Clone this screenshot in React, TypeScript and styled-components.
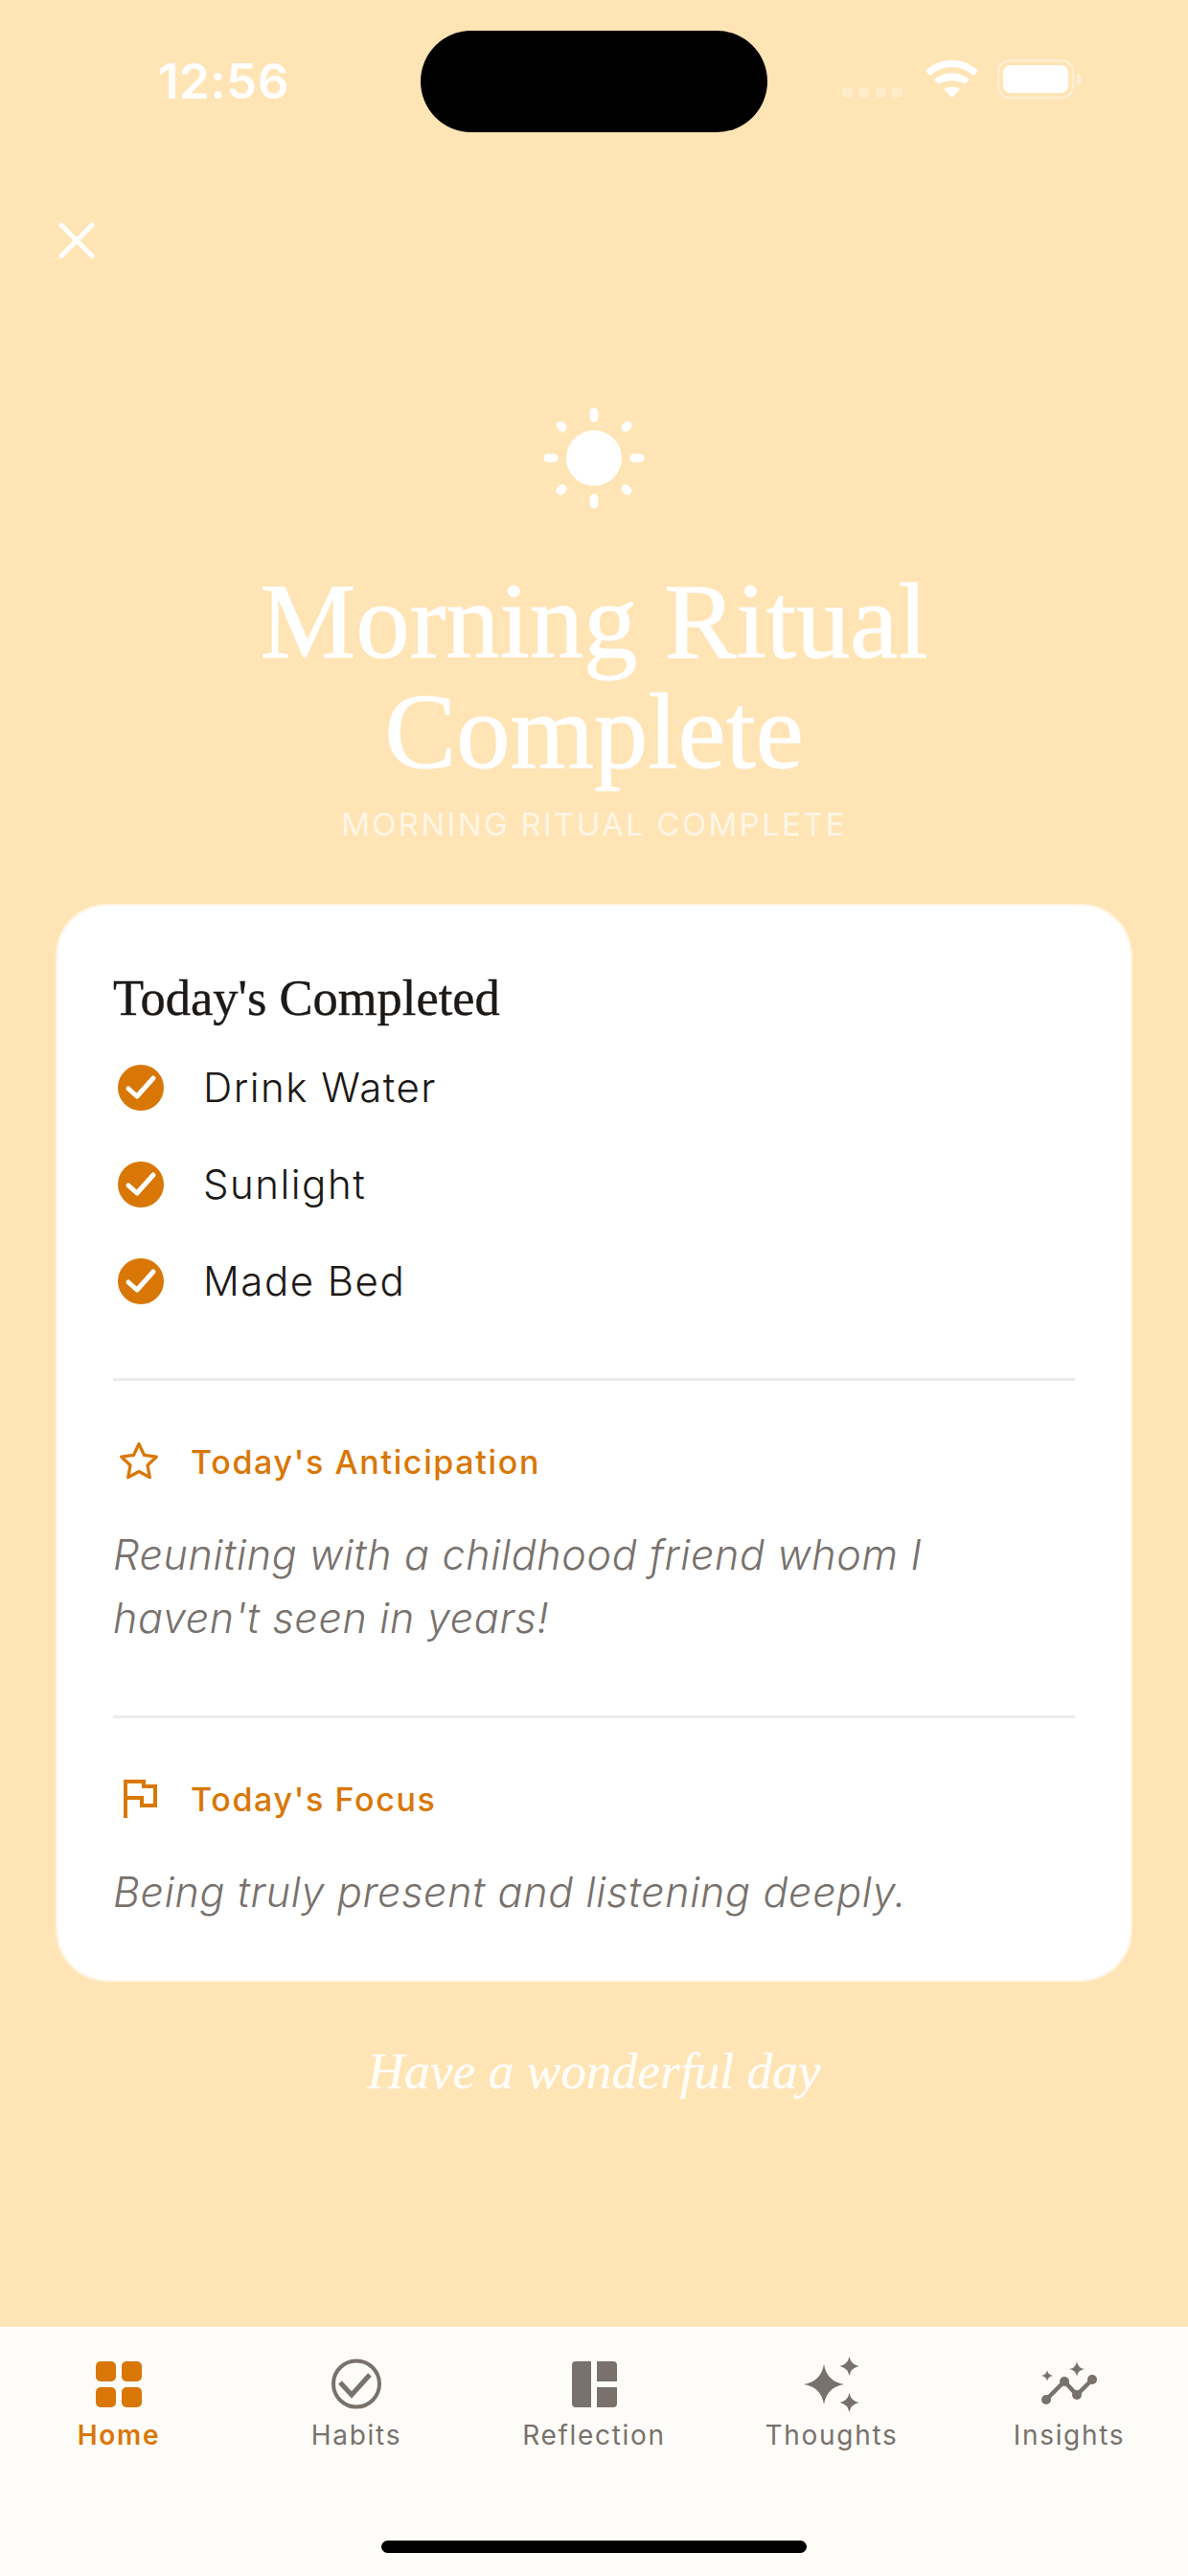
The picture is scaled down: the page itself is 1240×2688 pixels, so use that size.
import React from 'react';
import styled, { createGlobalStyle } from 'styled-components';

const GlobalStyle = createGlobalStyle`
  html, body {
    margin: 0;
    padding: 0;
    background: #ffe4b5;
  }
  * {
    box-sizing: border-box;
  }
`;

const SANS = `Inter, "Liberation Sans", sans-serif`;
const SERIF = `"Liberation Serif", serif`;
const ORANGE = '#d97706';
const GREY = '#78716c';

const Screen = styled.div`
  width: 1240px;
  height: 2688px;
  display: flex;
  flex-direction: column;
  background: #ffe4b5;
  overflow: hidden;
`;

const Main = styled.main`
  flex: 1;
  display: flex;
  flex-direction: column;
  min-height: 0;
`;

const StatusBar = styled.div`
  height: 170px;
  padding-top: 32px;
  display: grid;
  grid-template-columns: 439px 362px 1fr;
  align-items: start;
`;

const Time = styled.div`
  padding: 28px 0 0 165px;
  font-family: ${SANS};
  font-size: 51px;
  line-height: 50px;
  font-weight: 600;
  letter-spacing: 0.5px;
  color: #fff;
`;

const Island = styled.div`
  height: 106px;
  background: #000;
  border-radius: 53px;
`;

const StatusIcons = styled.div`
  padding: 30px 0 0 78px;
  line-height: 0;
`;

const CloseRow = styled.div`
  height: 116px;
  padding: 60px 0 0 59px;
  line-height: 0;
`;

const SunWrap = styled.div`
  display: flex;
  justify-content: center;
  margin-top: 139px;
  line-height: 0;
`;

const Title = styled.h1`
  margin: 60px 0 0;
  font-family: ${SERIF};
  font-size: 112.5px;
  line-height: 115px;
  font-weight: 400;
  color: #fff;
  text-align: center;
  -webkit-text-stroke: 1px #fff;
`;

const Subtitle = styled.div`
  margin-top: 19px;
  font-family: ${SANS};
  font-size: 33px;
  line-height: 40px;
  letter-spacing: 2.3px;
  color: rgba(255, 255, 255, 0.7);
  text-align: center;
`;

const Card = styled.section`
  margin: 63px 58px 0;
  padding: 66px 58px 0;
  height: 1125px;
  background: #fff;
  border: 2px solid rgba(255, 255, 255, 0.6);
  background-clip: padding-box;
  border-radius: 54px;
`;

const CardTitle = styled.h2`
  margin: 0 0 13px;
  font-family: ${SERIF};
  font-size: 52.5px;
  line-height: 60px;
  font-weight: 400;
  color: #1c1917;
  -webkit-text-stroke: 0.4px #1c1917;
`;

const HabitRow = styled.div`
  height: 101px;
  display: flex;
  align-items: center;
  gap: 41px;
  padding-left: 5px;
  font-family: ${SANS};
  font-size: 42px;
  font-weight: 300;
  letter-spacing: 1.5px;
  color: #1c1917;
`;

const Divider = styled.hr`
  margin: 0;
  border: 0;
  height: 3px;
  background: #ecebe8;
`;

const HabitList = styled.div`
  margin-bottom: 51px;
`;

const Section = styled.div<{ $bottom: number }>`
  padding-top: 62px;
  padding-bottom: ${(p) => p.$bottom}px;
`;

const SectionHead = styled.div`
  display: flex;
  align-items: center;
  gap: 31px;
  padding-left: 4px;
  height: 44px;
  font-family: ${SANS};
  font-size: 34px;
  font-weight: 500;
  letter-spacing: 1.65px;
  color: ${ORANGE};
`;

const SectionBody = styled.p`
  margin: 42px 0 0;
  font-family: ${SANS};
  font-size: 43px;
  line-height: 66px;
  font-style: italic;
  font-weight: 300;
  letter-spacing: 0.7px;
  color: ${GREY};
`;

const Farewell = styled.div`
  margin-top: 63px;
  font-family: ${SERIF};
  font-size: 53.4px;
  line-height: 60px;
  font-style: italic;
  color: rgba(255, 255, 255, 0.9);
  text-align: center;
  -webkit-text-stroke: 0.4px rgba(255, 255, 255, 0.9);
`;

const TabBar = styled.nav`
  height: 260px;
  flex: none;
  background: #fdfcf8;
  position: relative;
  display: grid;
  grid-template-columns: repeat(5, 248px);
  align-items: start;
`;

const Tab = styled.div<{ $active?: boolean }>`
  display: flex;
  flex-direction: column;
  align-items: center;
  padding-top: 34px;
  font-family: ${SANS};
  font-size: 28px;
  line-height: 34px;
  letter-spacing: 1.7px;
  font-weight: ${(p) => (p.$active ? 600 : 400)};
  color: ${(p) => (p.$active ? ORANGE : GREY)};
`;

const TabIcon = styled.div`
  width: 72px;
  height: 52px;
  margin-bottom: 10px;
  line-height: 0;

  svg {
    overflow: visible;
  }
`;

const HomeIndicator = styled.div`
  position: absolute;
  left: 398px;
  bottom: 24px;
  width: 444px;
  height: 13px;
  border-radius: 7px;
  background: #000;
`;

const Check = () => (
  <svg width="48" height="48" viewBox="0 0 48 48">
    <circle cx="24" cy="24" r="24" fill={ORANGE} />
    <path d="M11 25l9 8 17-19" fill="none" stroke="#fff" strokeWidth="5" strokeLinecap="round" strokeLinejoin="round" />
  </svg>
);

const Sun = () => (
  <svg width="106" height="106" viewBox="0 0 106 106">
    <circle cx="53" cy="53" r="29" fill="#fff" />
    <g stroke="#fff" strokeWidth="9" strokeLinecap="round">
      <path d="M53 5v6M53 95v6M5 53h6M95 53h6" />
      <path d="M18 19l2 2M88 19l-2 2M18 87l2-2M88 87l-2-2" />
    </g>
  </svg>
);

const Close = () => (
  <svg width="42" height="42" viewBox="0 0 42 42">
    <path d="M5 5l32 32M37 5L5 37" stroke="#fff" strokeWidth="5" strokeLinecap="round" />
  </svg>
);

const StatusGlyphs = () => (
  <svg width="260" height="46" viewBox="0 0 260 46">
    <g fill="#fff" opacity="0.3">
      <rect x="0" y="29" width="11" height="11" rx="4" />
      <rect x="17" y="29" width="11" height="11" rx="4" />
      <rect x="35" y="29" width="11" height="11" rx="4" />
      <rect x="52" y="29" width="11" height="11" rx="4" />
    </g>
    <path d="M87 12C102-3 127-3 142 12l-5 5C124 5 105 5 92 17zM96 21c10-9 27-9 37 0l-5 5c-7-5-20-5-27 0zM106 31c5-3 12-3 17 0l-8.500 9z" fill="#fff" />
    <rect x="163" y="1" width="78" height="39" rx="12" fill="none" stroke="#fff" strokeOpacity="0.4" strokeWidth="2.500" />
    <rect x="168" y="6" width="68" height="29" rx="8" fill="#fff" />
    <path d="M245 14c3 1 5 4 5 7s-2 5-5 6z" fill="#fff" opacity="0.4" />
  </svg>
);

const Star = () => (
  <svg width="46" height="46" viewBox="0 0 24 24" fill="none" stroke={ORANGE} strokeWidth="1.700" strokeLinejoin="round">
    <path d="M12 2.500l2.900 6.100 6.600.9-4.800 4.600 1.200 6.600-5.900-3.200-5.900 3.200 1.200-6.600-4.800-4.600 6.600-.9z" />
  </svg>
);

const Flag = () => (
  <svg width="46" height="46" viewBox="0 0 46 46" fill="none" stroke={ORANGE} strokeWidth="4">
    <path d="M9 43V5h19v5h12v20H26v-8H9" />
  </svg>
);

const HomeGlyph = () => (
  <svg width="72" height="52" viewBox="0 0 72 52" fill={ORANGE}>
    <rect x="12" y="2" width="21" height="21" rx="5" />
    <rect x="39" y="2" width="21" height="21" rx="5" />
    <rect x="12" y="29" width="21" height="21" rx="5" />
    <rect x="39" y="29" width="21" height="21" rx="5" />
  </svg>
);

const HabitsGlyph = () => (
  <svg width="72" height="52" viewBox="0 0 72 52" fill="none" stroke={GREY} strokeWidth="4">
    <circle cx="36" cy="25.500" r="24" />
    <path d="M19 24l12 13 19-21" strokeWidth="5" />
  </svg>
);

const ReflectionGlyph = () => (
  <svg width="72" height="52" viewBox="0 0 72 52" fill={GREY}>
    <path d="M17 2h16v48H17a4 4 0 0 1-4-4V6a4 4 0 0 1 4-4z" />
    <path d="M39 2h17a4 4 0 0 1 4 4v17H39z" />
    <path d="M39 29h21v17a4 4 0 0 1-4 4H39z" />
  </svg>
);

const ThoughtsGlyph = () => (
  <svg width="72" height="52" viewBox="0 0 72 52" fill={GREY}>
    <path d="M28 5Q31 23 49 26 31 29 28 47 25 29 7 26 25 23 28 5z" />
    <path d="M54.500-3Q56 5 64.500 7 56 9 54.500 17 53 9 44.500 7 53 5 54.500-3z" />
    <path d="M54.500 35Q56 43 64.500 45 56 47 54.500 55 53 47 44.500 45 53 43 54.500 35z" />
  </svg>
);

const InsightsGlyph = () => (
  <svg width="72" height="52" viewBox="0 0 72 52" fill={GREY}>
    <path d="M12 42l19-19 13 14 16-16" fill="none" stroke={GREY} strokeWidth="4.500" />
    <circle cx="12" cy="42" r="5" />
    <circle cx="31" cy="23" r="5" />
    <circle cx="44" cy="37" r="5" />
    <circle cx="60" cy="21" r="5" />
    <path d="M44 2Q45 9 52 10 45 11 44 18 43 11 36 10 43 9 44 2z" />
    <path d="M13 11Q13.500 16 19 17 13.500 18 13 23 12.500 18 7 17 12.500 16 13 11z" />
  </svg>
);

const habits = ['Drink Water', 'Sunlight', 'Made Bed'];

const tabs = [
  { label: 'Home', icon: <HomeGlyph />, active: true },
  { label: 'Habits', icon: <HabitsGlyph /> },
  { label: 'Reflection', icon: <ReflectionGlyph /> },
  { label: 'Thoughts', icon: <ThoughtsGlyph /> },
  { label: 'Insights', icon: <InsightsGlyph /> },
];

const App = () => {
  return (
    <Screen>
      <GlobalStyle />
      <Main>
        <StatusBar>
          <Time>12:56</Time>
          <Island />
          <StatusIcons>
            <StatusGlyphs />
          </StatusIcons>
        </StatusBar>

        <CloseRow>
          <Close />
        </CloseRow>

        <SunWrap>
          <Sun />
        </SunWrap>

        <Title>
          Morning Ritual
          <br />
          Complete
        </Title>
        <Subtitle>MORNING RITUAL COMPLETE</Subtitle>

        <Card>
          <CardTitle>Today's Completed</CardTitle>
          <HabitList>
            {habits.map((name) => (
              <HabitRow key={name}>
                <Check />
                {name}
              </HabitRow>
            ))}
          </HabitList>
          <Divider />
          <Section $bottom={69}>
            <SectionHead>
              <Star />
              Today's Anticipation
            </SectionHead>
            <SectionBody>
              Reuniting with a childhood friend whom I
              <br />
              haven't seen in years!
            </SectionBody>
          </Section>
          <Divider />
          <Section $bottom={0}>
            <SectionHead>
              <Flag />
              Today's Focus
            </SectionHead>
            <SectionBody>Being truly present and listening deeply.</SectionBody>
          </Section>
        </Card>

        <Farewell>Have a wonderful day</Farewell>
      </Main>

      <TabBar>
        {tabs.map((tab) => (
          <Tab key={tab.label} $active={tab.active}>
            <TabIcon>{tab.icon}</TabIcon>
            {tab.label}
          </Tab>
        ))}
        <HomeIndicator />
      </TabBar>
    </Screen>
  );
};

export default App;
